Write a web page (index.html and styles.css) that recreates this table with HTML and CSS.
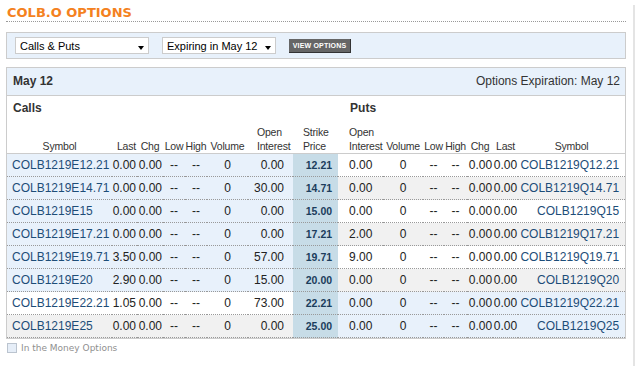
FILE: index.html
```html
<!DOCTYPE html>
<html lang="en">
<head>
  <meta charset="UTF-8" />
  <title>COLB.O Options</title>
  <link rel="stylesheet" href="styles.css">
</head>
<body>

<div class="page">
  <h1 class="title">COLB.O OPTIONS</h1>

  <form class="filters">
    <span class="select">
      <select><option>Calls &amp; Puts</option></select>
    </span>
    <span class="select narrow">
      <select><option>Expiring in May 12</option></select>
    </span>
    <button type="button" class="view-btn">VIEW OPTIONS</button>
  </form>

  <div class="chain">
    <div class="chain-head">
      <span class="bold">May 12</span>
      <span>Options Expiration: May 12</span>
    </div>

    <table>
      <colgroup>
        <col class="w-sym-c"><col class="w-last"><col class="w-chg"><col class="w-low"><col class="w-high"><col class="w-vol"><col class="w-oi">
        <col class="w-strike">
        <col class="w-oi"><col class="w-vol-p"><col class="w-low-p"><col class="w-high-p"><col class="w-chg"><col class="w-last"><col class="w-sym-p">
      </colgroup>
      <thead>
        <tr class="side">
          <th colspan="8" class="side-calls">Calls</th>
          <th colspan="7" class="side-puts">Puts</th>
        </tr>
        <tr class="cols">
          <th>Symbol</th><th>Last</th><th>Chg</th><th>Low</th><th>High</th><th>Volume</th><th>Open<br>Interest</th>
          <th>Strike<br>Price</th>
          <th>Open<br>Interest</th><th>Volume</th><th>Low</th><th>High</th><th>Chg</th><th>Last</th><th>Symbol</th>
        </tr>
      </thead>
      <tbody>
        <tr class="call-itm">
          <td>COLB1219E12.21</td><td>0.00</td><td>0.00</td><td>--</td><td>--</td><td>0</td><td>0.00</td>
          <td>12.21</td>
          <td>0.00</td><td>0</td><td>--</td><td>--</td><td>0.00</td><td>0.00</td><td>COLB1219Q12.21</td>
        </tr>
        <tr class="call-itm put-alt">
          <td>COLB1219E14.71</td><td>0.00</td><td>0.00</td><td>--</td><td>--</td><td>0</td><td>30.00</td>
          <td>14.71</td>
          <td>0.00</td><td>0</td><td>--</td><td>--</td><td>0.00</td><td>0.00</td><td>COLB1219Q14.71</td>
        </tr>
        <tr class="call-itm">
          <td>COLB1219E15</td><td>0.00</td><td>0.00</td><td>--</td><td>--</td><td>0</td><td>0.00</td>
          <td>15.00</td>
          <td>0.00</td><td>0</td><td>--</td><td>--</td><td>0.00</td><td>0.00</td><td>COLB1219Q15</td>
        </tr>
        <tr class="call-itm put-alt">
          <td>COLB1219E17.21</td><td>0.00</td><td>0.00</td><td>--</td><td>--</td><td>0</td><td>0.00</td>
          <td>17.21</td>
          <td>2.00</td><td>0</td><td>--</td><td>--</td><td>0.00</td><td>0.00</td><td>COLB1219Q17.21</td>
        </tr>
        <tr class="call-itm">
          <td>COLB1219E19.71</td><td>3.50</td><td>0.00</td><td>--</td><td>--</td><td>0</td><td>57.00</td>
          <td>19.71</td>
          <td>9.00</td><td>0</td><td>--</td><td>--</td><td>0.00</td><td>0.00</td><td>COLB1219Q19.71</td>
        </tr>
        <tr class="call-itm put-alt">
          <td>COLB1219E20</td><td>2.90</td><td>0.00</td><td>--</td><td>--</td><td>0</td><td>15.00</td>
          <td>20.00</td>
          <td>0.00</td><td>0</td><td>--</td><td>--</td><td>0.00</td><td>0.00</td><td>COLB1219Q20</td>
        </tr>
        <tr class="put-itm">
          <td>COLB1219E22.21</td><td>1.05</td><td>0.00</td><td>--</td><td>--</td><td>0</td><td>73.00</td>
          <td>22.21</td>
          <td>0.00</td><td>0</td><td>--</td><td>--</td><td>0.00</td><td>0.00</td><td>COLB1219Q22.21</td>
        </tr>
        <tr class="call-alt put-itm">
          <td>COLB1219E25</td><td>0.00</td><td>0.00</td><td>--</td><td>--</td><td>0</td><td>0.00</td>
          <td>25.00</td>
          <td>0.00</td><td>0</td><td>--</td><td>--</td><td>0.00</td><td>0.00</td><td>COLB1219Q25</td>
        </tr>
      </tbody>
    </table>
  </div>

  <label class="itm-toggle"><span class="box"></span>In the Money Options</label>
</div>

</body>
</html>
```

FILE: styles.css
```css
body {
  margin: 0;
  font-family: "Liberation Sans", Arial, sans-serif;
  font-size: 12px;
  color: #222;
  background-color: #fff;
}

.page {
  width: 627px;
  min-height: 366px;
  padding-left: 6px;
  border-right: 2px solid #e4e4e4;
}

.title {
  width: 620px;
  box-sizing: border-box;
  margin: 5px 0 0;
  padding-left: 1px;
  font: bold 13px/16px "DejaVu Sans", Verdana, sans-serif;
  color: #f48120;
  border-bottom: 1px dotted #999;
}

/* filter bar */

.filters {
  width: 620px;
  height: 27px;
  box-sizing: border-box;
  margin: 10px 0 0;
  padding: 0 8px;
  display: flex;
  align-items: center;
  gap: 13px;
  background-color: #e8f1fb;
  border: 1px solid #ccc;
}

.select {
  position: relative;
  display: block;
}

.select select {
  appearance: none;
  -webkit-appearance: none;
  display: block;
  width: 134px;
  height: 17px;
  margin: 0;
  padding: 0 0 0 4px;
  border: 1px solid #ccc;
  border-radius: 0;
  background-color: #fff;
  font: 11px "Liberation Sans", Arial, sans-serif;
  color: #000;
}

.select.narrow select {
  width: 114px;
}

.select::after {
  content: "";
  position: absolute;
  right: 5px;
  top: 9px;
  border-left: 3.5px solid transparent;
  border-right: 3.5px solid transparent;
  border-top: 4px solid #000;
  pointer-events: none;
}

.view-btn {
  width: 62px;
  height: 14px;
  padding: 0;
  border: none;
  border-right: 1px solid #333;
  border-bottom: 1px solid #333;
  background-color: #666;
  color: #fff;
  font: bold 7px/13px "Liberation Sans", Arial, sans-serif;
  letter-spacing: 0.2px;
  white-space: nowrap;
}

/* option chain */

.chain {
  width: 620px;
  box-sizing: border-box;
  margin-top: 8px;
  border: 1px solid #ccc;
}

.chain-head {
  display: flex;
  justify-content: space-between;
  height: 27px;
  line-height: 27px;
  padding: 0 5px 0 6px;
  background-color: #e8f1fb;
  border-bottom: 1px solid #ccc;
  color: #333;
}

.bold {
  font-weight: bold;
}

.chain table {
  width: 100%;
  table-layout: fixed;
  border-collapse: separate;
  border-spacing: 0;
}

.chain th,
.chain td {
  padding: 0;
  white-space: nowrap;
}

.w-sym-c { width: 105px; }
.w-last { width: 25px; }
.w-chg { width: 26px; }
.w-low { width: 22px; }
.w-high { width: 22px; }
.w-vol { width: 41px; }
.w-oi { width: 45px; }
.w-strike { width: 45px; }
.w-vol-p { width: 40px; }
.w-low-p { width: 21px; }
.w-high-p { width: 23px; }
.w-sym-p { width: 107px; }

.side th {
  height: 24px;
  text-align: left;
  font-size: 12px;
  font-weight: bold;
  color: #333;
}

.side .side-calls { padding-left: 6px; }
.side .side-puts { padding-left: 12px; }

.cols th {
  height: 33px;
  vertical-align: bottom;
  text-align: center;
  font-size: 10.5px;
  font-weight: normal;
  line-height: 14px;
  letter-spacing: -0.2px;
  color: #333;
  border-bottom: 1px solid #ccc;
}

.cols th:nth-child(2) { text-align: right; padding-right: 1px; }
.cols th:nth-child(7) { text-align: left; padding-left: 9px; }
.cols th:nth-child(8) { text-align: left; padding-left: 10px; }
.cols th:nth-child(9) { text-align: left; padding-left: 11px; }

tbody td {
  height: 22px;
  text-align: center;
  border-bottom: 1px dotted #999;
}

tbody td:nth-child(1) { text-align: left; padding-left: 5px; color: #1d4d78; }
tbody td:nth-child(2) { text-align: right; padding-right: 1px; }
tbody td:nth-child(3) { text-align: right; padding-right: 1px; }
tbody td:nth-child(7) { text-align: right; padding-right: 9px; }
tbody td:nth-child(9) { text-align: left; padding-left: 11px; }
tbody td:nth-child(13) { text-align: right; padding-right: 1px; }
tbody td:nth-child(14) { text-align: right; padding-right: 1px; }
tbody td:nth-child(15) { text-align: right; padding-right: 6px; color: #1d4d78; }

tbody td:nth-child(8) {
  text-align: right;
  padding-right: 6px;
  font-size: 10.5px;
  font-weight: bold;
  color: #1b3d5c;
  background-color: #c7dce7;
}

tr.call-itm td:nth-child(-n+7),
tr.put-itm td:nth-child(n+9) {
  background-color: #e8f1fb;
}

tr.call-alt td:nth-child(-n+7),
tr.put-alt td:nth-child(n+9) {
  background-color: #f1f1f1;
}

/* footer toggle */

.itm-toggle {
  display: flex;
  align-items: center;
  gap: 4px;
  margin: 4px 0 0 1px;
  font: 9px "DejaVu Sans", Verdana, sans-serif;
  color: #8f8f8f;
}

.itm-toggle .box {
  width: 8px;
  height: 8px;
  border: 1px solid #bbc4cf;
  background-color: #e6eef8;
}
```
